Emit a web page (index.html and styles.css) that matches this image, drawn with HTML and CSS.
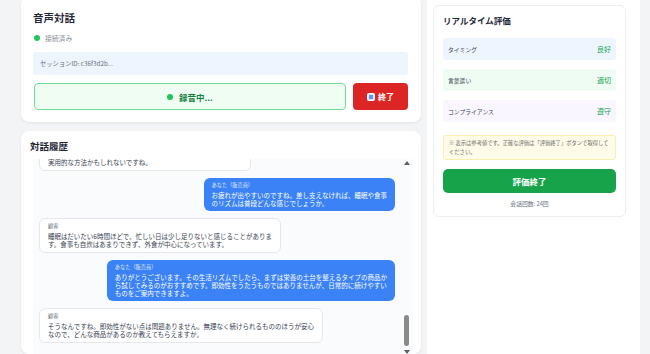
FILE: index.html
```html
<!DOCTYPE html>
<html lang="ja">
<head>
    <meta charset="UTF-8">
    <title>音声対話</title>
    <link rel="stylesheet" href="styles.css">
</head>
<body>
<div id="page">
    <div id="main">
        <div class="card" id="voice-card">
            <h2 class="card-title">音声対話</h2>
            <div class="status"><span class="dot"></span>接続済み</div>
            <div class="session">セッションID: c36f3d2b...</div>
            <div class="controls">
                <div class="rec-btn"><span class="dot"></span>録音中...</div>
                <button class="end-btn">
                    <svg width="8" height="8" viewBox="0 0 8 8"><rect x="0.5" y="0.5" width="7" height="7" rx="1" fill="#dbe9ff" stroke="#ffffff"/><rect x="2" y="2" width="4" height="4" fill="#5a9bf5"/></svg>
                    <span>終了</span>
                </button>
            </div>
        </div>

        <div class="card" id="history-card">
            <h2 class="card-title">対話履歴</h2>
            <div class="chat-box">
                <div class="chat">
                    <div class="chat-list">
                        <div class="msg them"><div class="who">顧客</div>こんにちは。最近ちょっと疲れやすくて、何か良いものがないかと思って来ました。</div>
                        <div class="msg me"><div class="who">あなた（販売員）</div>いらっしゃいませ。ご来店ありがとうございます。<br>疲れやすさが気になっていらっしゃるのですね。</div>
                        <div class="msg them"><div class="who">顧客</div>はい。仕事が忙しくて、夕方になるとぐったりしてしまうんです。</div>
                        <div class="msg me"><div class="who">あなた（販売員）</div>それは大変ですね。差し支えなければ、いつ頃から<br>そう感じるようになったか伺ってもよろしいですか。</div>
                        <div class="msg them"><div class="who">顧客</div>ここ半年くらいですね。年齢のせいもあるのかなと思っています。</div>
                        <div class="msg me"><div class="who">あなた（販売員）</div>そうでしたか。生活の変化などが重なると、<br>疲れを感じやすくなることもありますね。</div>
                        <div class="msg them"><div class="who">顧客</div>そうかもしれません。何から始めればいいのか分からなくて。</div>
                        <div class="msg me"><div class="who">あなた（販売員）</div>まずは普段の生活の様子から一緒に確認してみましょう。<br>無理にお勧めすることはありませんので、ご安心ください。</div>
                        <div class="msg them"><div class="who">顧客</div>ありがとうございます。サプリメントも気になっているんですが、<br>種類が多くて選び方が分からないんです。忙しい自分には<br>実用的な方法かもしれないですね。</div>
                        <div class="msg me"><div class="who">あなた（販売員）</div>お疲れが出やすいのですね。差し支えなければ、睡眠や食事<br>のリズムは普段どんな感じでしょうか。</div>
                        <div class="msg them"><div class="who">顧客</div>睡眠はだいたい6時間ほどで、忙しい日は少し足りないと感じることがありま<br>す。食事も自炊はあまりできず、外食が中心になっています。</div>
                        <div class="msg me"><div class="who">あなた（販売員）</div>ありがとうございます。その生活リズムでしたら、まずは栄養の土台を整えるタイプの商品か<br>ら試してみるのがおすすめです。即効性をうたうものではありませんが、日常的に続けやすい<br>ものをご案内できますよ。</div>
                        <div class="msg them"><div class="who">顧客</div>そうなんですね。即効性がない点は問題ありません。無理なく続けられるもののほうが安心<br>なので、どんな商品があるのか教えてもらえますか。</div>
                    </div>
                </div>
                <div class="scrollbar">
                    <span class="arrow up"></span>
                    <span class="thumb"></span>
                    <span class="arrow down"></span>
                </div>
            </div>
        </div>
    </div>

    <div id="side">
        <div class="eval-card">
            <h3 class="eval-title">リアルタイム評価</h3>
            <div class="eval-row blue"><span>タイミング</span><span class="ok">良好</span></div>
            <div class="eval-row green"><span>言葉遣い</span><span class="ok">適切</span></div>
            <div class="eval-row purple"><span>コンプライアンス</span><span class="ok">遵守</span></div>
            <div class="notice">※ 表示は参考値です。正確な評価は「評価終了」ボタンで取得して<br>ください。</div>
            <button class="finish-btn">評価終了</button>
            <div class="count">会話回数: 24回</div>
        </div>
    </div>
</div>
</body>
</html>
```

FILE: styles.css
```css
* {
    padding: 0;
    margin: 0;
    box-sizing: border-box;
}

html, body {
    width: 100%;
    height: 100%;
    overflow: hidden;
}

body {
    background: #f3f4f6;
    font-family: "Noto Sans CJK JP", "Noto Sans", sans-serif;
    color: #1f2937;
}

#page {
    display: grid;
    grid-template-columns: 400px 213px;
    column-gap: 6px;
    padding-left: 21px;
    height: 100%;
}

#main {
    display: flex;
    flex-direction: column;
    gap: 9px;
    min-height: 0;
}

.card {
    background: #ffffff;
    border-radius: 8px;
    box-shadow: 0 1px 3px rgba(0, 0, 0, 0.08);
}

.card-title {
    font-size: 10.5px;
    font-weight: 700;
    color: #1f2937;
}

/* 音声対話 */
#voice-card {
    margin-top: -4px;
    padding: 12px 13px 12px 12px;
}

#voice-card .card-title {
    line-height: 20px;
}

.dot {
    display: inline-block;
    width: 6px;
    height: 6px;
    border-radius: 50%;
    background: #22c55e;
}

.status {
    display: flex;
    align-items: center;
    gap: 5px;
    margin-top: 4px;
    padding-left: 1px;
    height: 12px;
    font-size: 6.8px;
    color: #8b9099;
}

.session {
    margin-top: 8px;
    height: 23px;
    line-height: 23px;
    padding-left: 7px;
    background: #eef5ff;
    border-radius: 3px;
    font-size: 6.3px;
    color: #6b7280;
}

.controls {
    display: flex;
    gap: 7px;
    margin-top: 8px;
    padding-left: 1px;
}

.rec-btn {
    flex: 1;
    height: 27px;
    display: flex;
    align-items: center;
    justify-content: center;
    gap: 6px;
    background: #effdf3;
    border: 1px solid #6fdc93;
    border-radius: 4px;
    font-size: 8.5px;
    font-weight: 700;
    color: #15803d;
}

.end-btn {
    width: 55px;
    height: 27px;
    display: flex;
    align-items: center;
    justify-content: center;
    gap: 3px;
    background: #dc2626;
    border: none;
    border-radius: 4px;
    font-family: inherit;
    font-size: 8px;
    font-weight: 700;
    color: #ffffff;
}

/* 対話履歴 */
#history-card {
    flex: 1;
    padding: 7px 8px 0 9px;
    min-height: 0;
}

#history-card .card-title {
    font-size: 9.5px;
    line-height: 16px;
}

.chat-box {
    position: relative;
    margin-top: 5px;
    margin-left: 3px;
    height: 199px;
    background: #fafbfc;
}

.chat {
    height: 100%;
    overflow-y: scroll;
    display: flex;
    flex-direction: column-reverse;
    scrollbar-width: none;
}

.chat-list {
    display: flex;
    flex-direction: column;
    gap: 7px;
    padding: 8px 18px 15px 6px;
}

.msg {
    width: fit-content;
    max-width: 100%;
    padding: 3px 8px 4px 8px;
    border-radius: 6px;
    font-size: 6.5px;
    line-height: 8px;
    white-space: nowrap;
}

.msg .who {
    font-size: 5.2px;
    line-height: 8px;
    margin-bottom: 2px;
}

.msg.them {
    background: #ffffff;
    border: 1px solid #e5e7eb;
    color: #374151;
}

.msg.them .who {
    color: #6b7280;
}

.msg.me {
    align-self: flex-end;
    background: #3b82f6;
    color: #ffffff;
}

.msg.me .who {
    color: rgba(255, 255, 255, 0.85);
}

.scrollbar {
    position: absolute;
    top: 0;
    right: 2px;
    bottom: 0;
    width: 8px;
}

.arrow {
    position: absolute;
    left: 1px;
    width: 0;
    height: 0;
    border-left: 3px solid transparent;
    border-right: 3px solid transparent;
}

.arrow.up {
    top: 2px;
    border-bottom: 4px solid #5f5f5f;
}

.arrow.down {
    bottom: 4px;
    border-top: 4px solid #5f5f5f;
}

.thumb {
    position: absolute;
    top: 156px;
    left: 1px;
    width: 5px;
    height: 31px;
    border-radius: 3px;
    background: #8a8a8a;
}

/* リアルタイム評価 */
#side {
    background: #ffffff;
    padding: 5px 14px 0 6px;
}

.eval-card {
    background: #ffffff;
    border: 1px solid #eceef1;
    border-radius: 6px;
    padding: 7px 9px 8px 9px;
}

.eval-title {
    font-size: 8.5px;
    font-weight: 700;
    line-height: 14px;
    color: #1f2937;
}

.eval-row {
    display: flex;
    justify-content: space-between;
    align-items: center;
    height: 22px;
    padding: 0 5px 0 5px;
    margin-top: 9px;
    border-radius: 3px;
    font-size: 5.8px;
    color: #374151;
}

.eval-row:first-of-type {
    margin-top: 11px;
}

.eval-row.blue {
    background: #eff5ff;
}

.eval-row.green {
    background: #effcf3;
}

.eval-row.purple {
    background: #faf6ff;
}

.eval-row .ok {
    color: #16a34a;
    font-size: 7px;
}

.notice {
    margin-top: 13px;
    padding: 3px 5px;
    background: #fefce8;
    border: 1px solid #fbefb0;
    border-radius: 3px;
    font-size: 5.3px;
    line-height: 8.5px;
    white-space: nowrap;
    color: #6b6b6b;
}

.finish-btn {
    display: block;
    width: 100%;
    height: 24px;
    margin-top: 9px;
    background: #16a34a;
    border: none;
    border-radius: 5px;
    font-family: inherit;
    font-size: 8.5px;
    font-weight: 700;
    color: #ffffff;
}

.count {
    margin-top: 6px;
    text-align: center;
    font-size: 5.8px;
    line-height: 9px;
    color: #6b7280;
}
```
